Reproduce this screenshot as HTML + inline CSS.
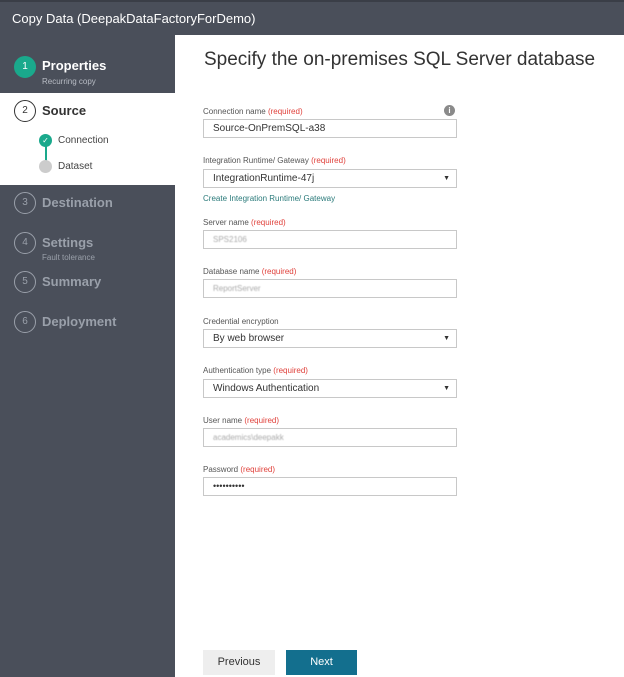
<!DOCTYPE html>
<html><head><meta charset="utf-8"><style>
*{margin:0;padding:0;box-sizing:border-box}
html,body{background:#ffffff}
body{width:624px;height:677px;position:relative;font-family:"Liberation Sans",sans-serif;overflow:hidden}
.a{position:absolute}
.side{left:0;top:0;width:175px;height:677px;background:#4a4f5a}
.top{left:0;top:0;width:624px;height:35px;background:#4a4f5a;border-top:2px solid #3a3e47}
.top span{position:absolute;left:12px;top:9px;color:#fff;font-size:13px}
.circ{width:22px;height:22px;border-radius:50%;border:1.5px solid #9aa0aa;color:#9aa0aa;font-size:10px;text-align:center;line-height:19px}
.st{color:#9aa0aa;font-size:13px;font-weight:bold}
.sub{color:#9aa0aa;font-size:8px}
.lbl{left:203px;font-size:8px;color:#555}
.lbl i{font-style:normal;color:#e0413b}
.in{left:203px;width:254px;height:19px;border:1px solid #c8c8c8;background:#fff;font-size:10px;color:#333;padding:3px 9px}
.blur span{display:inline-block;color:#aaa;filter:blur(0.6px);font-size:8px;padding-top:1px}
.arr{position:absolute;right:6px;top:5px;font-size:7px;color:#333}
</style></head><body>
<div class="a" style="left:175px;top:0;width:449px;height:677px;background:#ffffff"></div>
<div class="a side"></div>
<div class="a top"><span>Copy Data (DeepakDataFactoryForDemo)</span></div>
<div class="a" style="left:0;top:93px;width:175px;height:92px;background:#fff"></div>

<div class="a circ" style="left:14px;top:56px;background:#1aa98c;border-color:#1aa98c;color:#fff">1</div>
<div class="a st" style="left:42px;top:58px;color:#fff">Properties</div>
<div class="a sub" style="left:42px;top:77px;color:#b8bcc4">Recurring copy</div>

<div class="a circ" style="left:14px;top:100px;border-color:#333;color:#333">2</div>
<div class="a st" style="left:42px;top:103px;color:#333">Source</div>
<div class="a" style="left:45px;top:141px;width:2px;height:22px;background:#1aa98c"></div>
<div class="a" style="left:39px;top:134px;width:13px;height:13px;border-radius:50%;background:#1aa98c;color:#fff;font-size:8px;text-align:center;line-height:13px">✓</div>
<div class="a" style="left:58px;top:135px;font-size:10px;color:#444">Connection</div>
<div class="a" style="left:39px;top:160px;width:13px;height:13px;border-radius:50%;background:#ccc"></div>
<div class="a" style="left:58px;top:161px;font-size:10px;color:#444">Dataset</div>

<div class="a circ" style="left:14px;top:192px">3</div>
<div class="a st" style="left:42px;top:195px">Destination</div>
<div class="a circ" style="left:14px;top:232px">4</div>
<div class="a st" style="left:42px;top:235px">Settings</div>
<div class="a sub" style="left:42px;top:253px">Fault tolerance</div>
<div class="a circ" style="left:14px;top:271px">5</div>
<div class="a st" style="left:42px;top:274px">Summary</div>
<div class="a circ" style="left:14px;top:311px">6</div>
<div class="a st" style="left:42px;top:314px">Deployment</div>

<div class="a" style="left:204px;top:49px;font-size:19px;color:#333">Specify the on-premises SQL Server database</div>

<div class="a lbl" style="top:107px">Connection name <i>(required)</i></div>
<div class="a" style="left:444px;top:105px;width:11px;height:11px;border-radius:50%;background:#8a8a8a;color:#fff;font-size:8px;font-weight:bold;text-align:center;line-height:11px">i</div>
<div class="a in" style="top:119px">Source-OnPremSQL-a38</div>

<div class="a lbl" style="top:156px">Integration Runtime/ Gateway <i>(required)</i></div>
<div class="a in" style="top:169px">IntegrationRuntime-47j<span class="arr">▼</span></div>
<div class="a" style="left:203px;top:194px;font-size:8px;color:#2a7a7a">Create Integration Runtime/ Gateway</div>

<div class="a lbl" style="top:218px">Server name <i>(required)</i></div>
<div class="a in blur" style="top:230px"><span>SPS2106</span></div>

<div class="a lbl" style="top:267px">Database name <i>(required)</i></div>
<div class="a in blur" style="top:279px"><span>ReportServer</span></div>

<div class="a lbl" style="top:317px">Credential encryption</div>
<div class="a in" style="top:329px">By web browser<span class="arr">▼</span></div>

<div class="a lbl" style="top:366px">Authentication type <i>(required)</i></div>
<div class="a in" style="top:379px">Windows Authentication<span class="arr">▼</span></div>

<div class="a lbl" style="top:416px">User name <i>(required)</i></div>
<div class="a in blur" style="top:428px"><span>academics\deepakk</span></div>

<div class="a lbl" style="top:465px">Password <i>(required)</i></div>
<div class="a in" style="top:477px;font-size:9px;padding-top:3px">••••••••••</div>

<div class="a" style="left:203px;top:650px;width:72px;height:25px;background:#eee;color:#333;font-size:11px;text-align:center;line-height:25px">Previous</div>
<div class="a" style="left:286px;top:650px;width:71px;height:25px;background:#136f8e;color:#fff;font-size:11px;text-align:center;line-height:25px">Next</div>
</body></html>
